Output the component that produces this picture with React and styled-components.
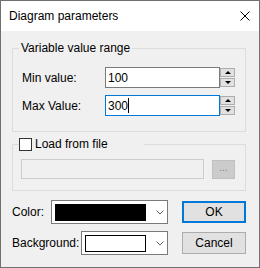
import React from 'react'
import styled, { createGlobalStyle } from 'styled-components'

const GlobalStyle = createGlobalStyle`
  html, body {
    margin: 0;
    padding: 0;
    background: #fff;
  }
  body {
    font-family: 'Liberation Sans', Arial, sans-serif;
    font-size: 12px;
    color: #000;
  }
`

const Window = styled.div`
  width: 260px;
  height: 268px;
  box-sizing: border-box;
  border: 1px solid #707070;
  display: flex;
  flex-direction: column;
  background: #f0f0f0;
`

const TitleBar = styled.div`
  height: 30px;
  flex: none;
  background: #fff;
  display: flex;
  align-items: center;
  justify-content: space-between;
  padding: 0 9px 0 8px;
`

const Title = styled.span`
  font-size: 12px;
  line-height: 16px;
`

const Body = styled.div`
  flex: 1;
  padding: 9px 13px 0 11px;
  display: flex;
  flex-direction: column;
`

const Group = styled.fieldset`
  margin: ${p => p.$mt || 0}px 0 0 0;
  padding: ${p => p.$pad};
  border: 1px solid #dcdcdc;
  min-width: 0;
`

const Legend = styled.legend`
  padding: 0 2px;
  margin-left: -3px;
  line-height: 16px;
  height: 16px;
`

const CheckLegend = styled.legend`
  padding: 0;
  margin-left: -2px;
  width: 125px;
  height: 16px;
  display: flex;
  align-items: center;
  gap: 3px;
  line-height: 16px;
`

const CheckBox = styled.span`
  width: 13px;
  height: 13px;
  box-sizing: border-box;
  border: 1px solid #333;
  background: #fff;
  flex: none;
`

const RangeGrid = styled.div`
  display: grid;
  grid-template-columns: 83px 115px 15px;
  row-gap: 7px;
  align-items: center;
`

const Label = styled.span`
  line-height: 16px;
  white-space: nowrap;
`

const TextBox = styled.div`
  height: 21px;
  box-sizing: border-box;
  border: 1px solid ${p => (p.$focused ? '#0078d7' : '#7a7a7a')};
  background: #fff;
  padding-left: 2px;
  display: flex;
  align-items: center;
  line-height: 16px;
`

const Caret = styled.span`
  display: inline-block;
  width: 1px;
  height: 15px;
  background: #000;
`

const Spin = styled.div`
  display: flex;
  flex-direction: column;
  gap: 1px;
`

const SpinButton = styled.div`
  width: 15px;
  height: 9px;
  box-sizing: border-box;
  border: 1px solid #adadad;
  background: #e1e1e1;
  display: flex;
  align-items: center;
  justify-content: center;
`

const Arrow = styled.span`
  width: 0;
  height: 0;
  border-left: 3px solid transparent;
  border-right: 3px solid transparent;
  ${p => (p.$down ? 'border-top: 3px solid #000;' : 'border-bottom: 3px solid #000;')}
`

const FileRow = styled.div`
  display: flex;
  align-items: center;
  gap: 8px;
`

const DisabledBox = styled.div`
  width: 183px;
  height: 20px;
  box-sizing: border-box;
  border: 1px solid #cccccc;
  background: #f0f0f0;
`

const BrowseButton = styled.div`
  width: 23px;
  height: 19px;
  box-sizing: border-box;
  border: 1px solid #bfbfbf;
  background: #cccccc;
  color: #838383;
  font-size: 10px;
  line-height: 14px;
  text-align: center;
`

const Bottom = styled.div`
  margin-top: 9px;
  display: flex;
  justify-content: space-between;
`

const ComboColumn = styled.div`
  width: 156px;
  display: flex;
  flex-direction: column;
  gap: 7px;
`

const ComboRow = styled.div`
  display: flex;
  align-items: center;
  justify-content: space-between;
`

const Combo = styled.div`
  width: ${p => p.$w}px;
  height: 24px;
  box-sizing: border-box;
  border: 1px solid #7a7a7a;
  background: #fff;
  display: flex;
  align-items: center;
  padding: 0 3px 0 3px;
  gap: 10px;
`

const Swatch = styled.div`
  flex: 1;
  height: 17px;
  box-sizing: border-box;
  background: ${p => p.$color};
  border: 1px solid #000;
`

const ButtonColumn = styled.div`
  display: flex;
  flex-direction: column;
  gap: 9px;
  padding-top: 1px;
`

const Button = styled.div`
  width: 64px;
  height: 22px;
  box-sizing: border-box;
  border: ${p => (p.$default ? '2px solid #0078d7' : '1px solid #adadad')};
  background: #e1e1e1;
  display: flex;
  align-items: center;
  justify-content: center;
  line-height: 16px;
`

const CloseIcon = () => (
  <svg width='10' height='10' viewBox='0 0 10 10'>
    <path d='M0.5 0.5 L9.5 9.5 M9.5 0.5 L0.5 9.5' stroke='#000' strokeWidth='1' fill='none' />
  </svg>
)

const Chevron = () => (
  <svg width='8' height='5' viewBox='0 0 8 5' style={{ flex: 'none' }}>
    <path d='M0.5 0.5 L4 4 L7.5 0.5' stroke='#606060' strokeWidth='1' fill='none' />
  </svg>
)

const SpinBox = () => (
  <Spin>
    <SpinButton><Arrow /></SpinButton>
    <SpinButton><Arrow $down /></SpinButton>
  </Spin>
)

const App = () => {
  return (
    <>
      <GlobalStyle />
      <Window>
        <TitleBar>
          <Title>Diagram parameters</Title>
          <CloseIcon />
        </TitleBar>
        <Body>
          <Group $pad='11px 0 15px 9px'>
            <Legend>Variable value range</Legend>
            <RangeGrid>
              <Label>Min value:</Label>
              <TextBox>100</TextBox>
              <SpinBox />
              <Label>Max Value:</Label>
              <TextBox $focused>300<Caret /></TextBox>
              <SpinBox />
            </RangeGrid>
          </Group>
          <Group $mt={4} $pad='7px 0 11px 8px'>
            <CheckLegend>
              <CheckBox />
              <Label>Load from file</Label>
            </CheckLegend>
            <FileRow>
              <DisabledBox />
              <BrowseButton>...</BrowseButton>
            </FileRow>
          </Group>
          <Bottom>
            <ComboColumn>
              <ComboRow>
                <Label>Color:</Label>
                <Combo $w={117}>
                  <Swatch $color='#000' />
                  <Chevron />
                </Combo>
              </ComboRow>
              <ComboRow>
                <Label>Background:</Label>
                <Combo $w={87}>
                  <Swatch $color='#fff' />
                  <Chevron />
                </Combo>
              </ComboRow>
            </ComboColumn>
            <ButtonColumn>
              <Button $default>OK</Button>
              <Button>Cancel</Button>
            </ButtonColumn>
          </Bottom>
        </Body>
      </Window>
    </>
  )
}

export default App
